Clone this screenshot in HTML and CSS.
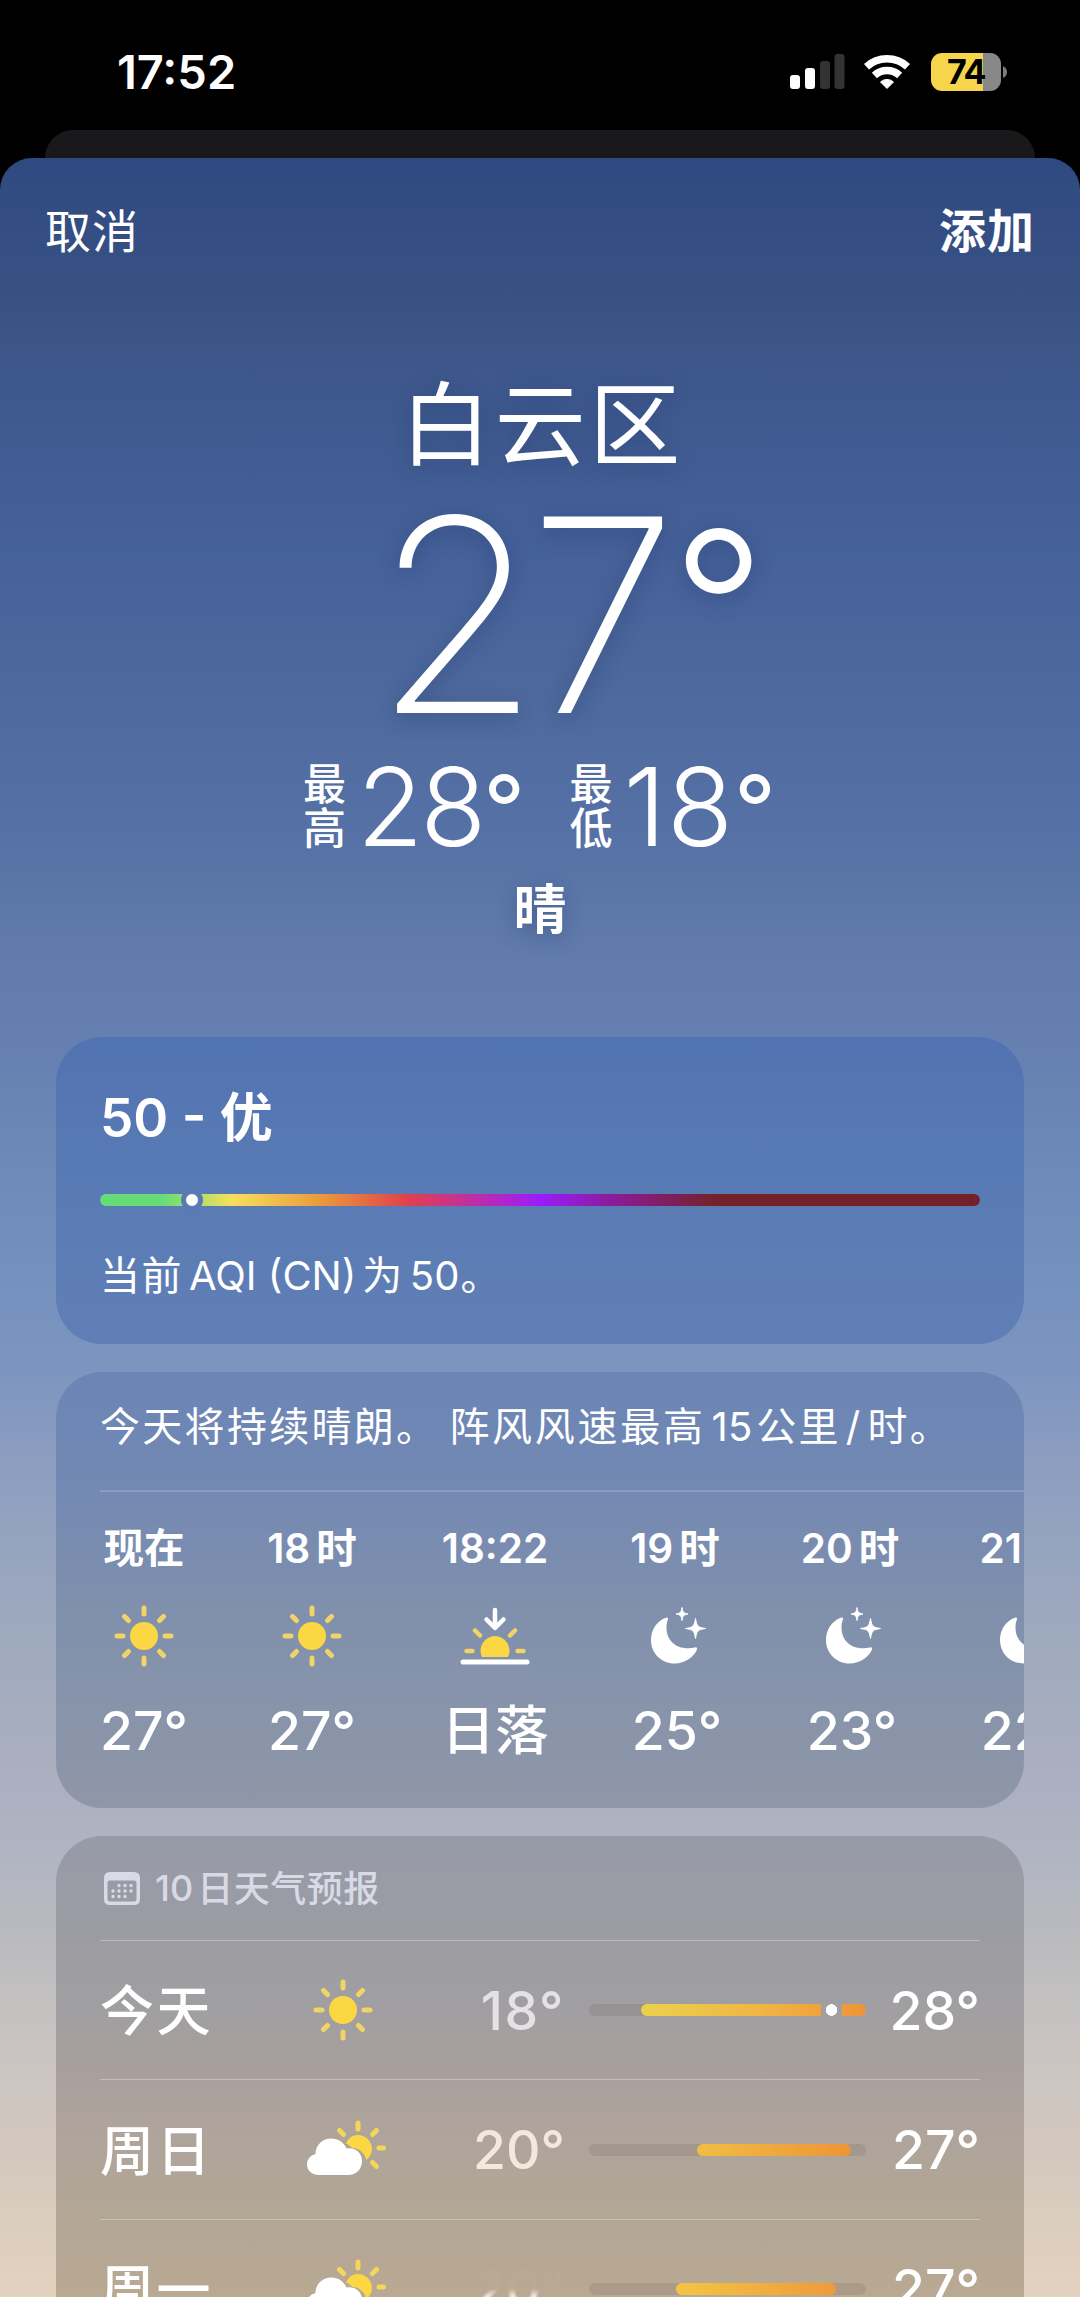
FILE: index.html
```html
<!DOCTYPE html>
<html lang="zh-CN">
<head>
<meta charset="utf-8">
<title>天气</title>
<link rel="stylesheet" href="styles.css">
</head>
<body>
<svg class="defs" width="0" height="0" aria-hidden="true">
  <symbol id="sun" viewBox="-30 -31 60 62">
    <circle r="14" fill="#fbd743"/>
    <g stroke="#f0d467" stroke-width="5" stroke-linecap="round">
      <path d="M0-28v6M0 22v6M-27 0h6M21 0h6M-19.5-19.5l4 4M15.5 15.5l4 4M19.5-19.5l-4 4M-15.5 15.5l-4 4"/>
    </g>
  </symbol>
  <symbol id="sunset" viewBox="-35 -31 70 62">
    <path d="M-13 21A14.500 14.500 0 1 1 13 21Z" fill="#fbd743"/>
    <path d="M-28.500 15h6M22.500 15h6M-20-5.500l5 5M20-5.500l-5 5" stroke="#f0d467" stroke-width="4.500" stroke-linecap="round"/>
    <path d="M0-26v17M-8.500-16.500l8.500 8.500 8.500-8.500" fill="none" stroke="#fff" stroke-width="4.500" stroke-linecap="round" stroke-linejoin="round"/>
    <path d="M-32 26h64" stroke="#fff" stroke-width="5" stroke-linecap="round"/>
  </symbol>
  <symbol id="moon" viewBox="0 -1 56 62">
    <path d="M15.500 11.500C5 15 0 24.500 0 34C0 47.500 10.500 57.500 23.500 57.500C34 57.500 43 51 46 43.500C46.500 42 45.500 41 44 41.500C27 45 15.500 36 15.500 21.500C15.500 18 16 16 16.800 14C17.300 12.500 17 11 15.500 11.500Z" fill="#fff"/>
    <path d="M31 1.500C31.800 6.500 32.500 7 37 8C32.500 9 31.800 9.500 31 14.500C30.200 9.500 29.500 9 25 8C29.500 7 30.200 6.500 31 1.500Z" fill="#fff" stroke="#fff" stroke-linejoin="round"/>
    <path d="M44.500 12.500C46 20.500 46.500 21.200 54.500 22.500C46.500 23.800 46 24.500 44.500 32.500C43 24.500 42.500 23.800 34.500 22.500C42.500 21.200 43 20.500 44.500 12.500Z" fill="#fff" stroke="#fff" stroke-linejoin="round"/>
  </symbol>
  <symbol id="cloud-sun" viewBox="0 0 80 60">
    <path d="M39 23.500C42 17 46.500 15 51 15C59 15 65 21.500 65 29C65 33.500 62.800 37 59.500 40C57 31 50 27.500 45 28C43.500 26 41.500 24.500 39 23.500Z" fill="#fbd743"/>
    <path d="M51 3v6M32.500 10.500l4 4M69.500 10.500l-4 4M72 28h4.500M65.500 42.500l4 4" stroke="#f5d658" stroke-width="5" stroke-linecap="round"/>
    <path d="M12 55C5 55 0 50.500 0 44.500C0 39.500 3 35.500 8.500 34C8.500 25 15.500 18.500 24 18.500C31.500 18.500 37 22.500 39.500 28.500C48.500 27 55 33 55 41C55 49 49.500 55 41 55Z" fill="#fff"/>
  </symbol>
</svg>

<header class="status">
  <time class="clock">17:52</time>
  <div class="indicators">
    <svg width="55" height="36" viewBox="0 0 55 36">
      <rect x="0" y="21" width="10" height="14" rx="3" fill="#fff"/>
      <rect x="15" y="14" width="10" height="21" rx="3" fill="#fff"/>
      <rect x="30" y="7" width="10" height="28" rx="3" fill="#333"/>
      <rect x="44.500" y="0" width="10" height="35" rx="3" fill="#333"/>
    </svg>
    <svg class="wifi" width="47" height="36" viewBox="0 0 47 36">
      <path d="M2.500 12.700A30.500 30.500 0 0 1 43.500 12.700M10.400 21.500A18.500 18.500 0 0 1 35.600 21.500" fill="none" stroke="#fff" stroke-width="7.500"/>
      <path d="M16.500 28A9.500 9.500 0 0 1 29.500 28L23 34.500Z" fill="#fff" stroke="#fff" stroke-linejoin="round"/>
    </svg>
    <div class="battery"><span>74</span></div>
    <svg class="battery-cap" width="4" height="12" viewBox="0 0 4 12"><path d="M0 0Q4 2 4 6T0 12Z" fill="#7c7c7e"/></svg>
  </div>
</header>

<div class="back-sheet"></div>

<main class="sheet">
  <nav class="toolbar">
    <span>取消</span>
    <span class="add">添加</span>
  </nav>

  <section class="summary">
    <h1 class="city">白云区</h1>
    <div class="now">27<i>°</i></div>
    <div class="range">
      <span class="range-label">最<br>高</span><span class="range-value high-value">28<i>°</i></span>
      <span class="range-label">最<br>低</span><span class="range-value low-value">18<i>°</i></span>
    </div>
    <div class="condition">晴</div>
  </section>

  <section class="card aqi">
    <h2 class="aqi-title">50 - 优</h2>
    <div class="aqi-bar"><span class="aqi-dot"></span></div>
    <p class="aqi-text">当前<span class="latin-a">AQI (CN)</span>为<span class="latin-b">50</span>。</p>
  </section>

  <section class="card hourly">
    <p class="hourly-text">今天将持续晴朗。<span class="sentence">阵风风速最高</span><span class="speed">15</span>公里<span class="slash">/</span>时。</p>
    <div class="hours">
      <div class="hour"><b>现在</b><svg width="60" height="62"><use href="#sun"/></svg><strong>27°</strong></div>
      <div class="hour"><b>18<i>时</i></b><svg width="60" height="62"><use href="#sun"/></svg><strong>27°</strong></div>
      <div class="hour"><b>18:22</b><svg width="70" height="62"><use href="#sunset"/></svg><strong>日落</strong></div>
      <div class="hour night"><b>19<i>时</i></b><svg width="56" height="62"><use href="#moon"/></svg><strong>25°</strong></div>
      <div class="hour night"><b>20<i>时</i></b><svg width="56" height="62"><use href="#moon"/></svg><strong>23°</strong></div>
      <div class="hour night"><b>21<i>时</i></b><svg width="56" height="62"><use href="#moon"/></svg><strong>22°</strong></div>
    </div>
  </section>

  <section class="card daily">
    <h3 class="daily-title">
      <svg width="36" height="33" viewBox="0 0 36 33">
        <path fill-rule="evenodd" d="M6 0H30Q36 0 36 6V27Q36 33 30 33H6Q0 33 0 27V6Q0 0 6 0ZM6 8.500Q3.500 8.500 3.500 11V27Q3.500 29.500 6 29.500H30Q32.500 29.500 32.500 27V11Q32.500 8.500 30 8.500Z" fill="#d8dae6"/>
        <path d="M15 13.500h.01M21 13.500h.01M27 13.500h.01M9 19h.01M15 19h.01M21 19h.01M27 19h.01M9 24.500h.01M15 24.500h.01M21 24.500h.01" stroke="#d8dae6" stroke-width="3.400" stroke-linecap="round"/>
      </svg>
      <span class="count">10</span><span class="caption">日天气预报</span>
    </h3>
    <div class="day">
      <span class="day-name">今天</span>
      <svg width="60" height="62"><use href="#sun"/></svg>
      <span class="low cool">18°</span>
      <div class="track"><span class="fill today"></span><span class="today-dot"></span></div>
      <span class="high">28°</span>
    </div>
    <div class="day">
      <span class="day-name">周日</span>
      <svg class="cloud" width="80" height="60"><use href="#cloud-sun"/></svg>
      <span class="low warm">20°</span>
      <div class="track"><span class="fill sunday"></span></div>
      <span class="high">27°</span>
    </div>
    <div class="day">
      <span class="day-name">周一</span>
      <svg class="cloud" width="80" height="60"><use href="#cloud-sun"/></svg>
      <span class="low faded">20°</span>
      <div class="track"><span class="fill monday"></span></div>
      <span class="high">27°</span>
    </div>
  </section>
</main>
</body>
</html>
```

FILE: styles.css
```css
* { box-sizing: border-box; }
html, body { height: 2297px; overflow: hidden; }
body {
  margin: 0;
  display: flex;
  flex-direction: column;
  background: #000;
  color: #fff;
  font-family: Inter, "Noto Sans CJK SC", sans-serif;
}
h1, h2, h3, p { margin: 0; font-weight: inherit; font-size: inherit; }
i { font-style: normal; }
svg { display: block; flex: none; }
.defs { position: absolute; }

.status {
  height: 130px;
  flex: none;
  display: flex;
  justify-content: space-between;
  align-items: flex-start;
  padding: 52px 73px 0 117px;
}
.clock { font-size: 47px; line-height: 40px; font-weight: 600; }
.indicators { display: flex; align-items: center; height: 40px; }
.wifi { margin-left: 19px; }
.battery {
  width: 70px;
  height: 38px;
  margin-left: 20px;
  border-radius: 11px;
  background: linear-gradient(90deg, #f6d54c 52px, #88888a 52px);
  color: #000;
  font-size: 34px;
  line-height: 38px;
  font-weight: 700;
  text-align: center;
  letter-spacing: -1.500px;
}
.battery-cap { margin-left: 2px; }

.back-sheet {
  flex: none;
  height: 60px;
  margin: 0 45px -32px;
  border-radius: 28px 28px 0 0;
  background: #19191b;
}

.sheet {
  position: relative;
  flex: none;
  height: 2139px;
  overflow: hidden;
  border-radius: 32px 32px 0 0;
  background: linear-gradient(180deg, #2f4a80 0, #385185 132px, #3c568a 192px, #46629a 400px, #4d689c 520px, #5671a5 680px, #617cac 800px, #6580b0 880px, #7390bd 1100px, #7c95c0 1210px, #8a9cc0 1290px, #95a3bf 1380px, #a0abbd 1500px, #adb0c0 1640px, #b1b4c2 1700px, #babbbe 1780px, #c9c4c2 1890px, #d4c8be 2000px, #e3d2be 2139px);
}
.toolbar {
  display: flex;
  justify-content: space-between;
  padding: 45px 45px 0;
  height: 162px;
  font-size: 46px;
  line-height: 56px;
  letter-spacing: 1px;
}
.toolbar .add { font-weight: 700; font-size: 47px; }

.summary {
  height: 717px;
  display: flex;
  flex-direction: column;
  align-items: center;
  text-shadow: 0 5px 22px rgba(20, 40, 90, .32);
}
.city { margin-top: 40px; height: 126px; font-size: 91px; line-height: 130px; letter-spacing: 3.500px; padding-left: 4px; }
.now {
  height: 240px;
  margin-top: 9px;
  padding-left: 47px;
  font-size: 270px;
  line-height: 240px;
  font-weight: 200;
  letter-spacing: -12px;
}
.now i { margin-left: 6px; font-size: 206px; font-weight: 270; line-height: 0; vertical-align: 34px; }
.range { display: flex; margin-top: 26px; height: 90px; width: 474px; align-items: center; text-shadow: none; }
.range-label { width: 42px; font-size: 43px; line-height: 44px; font-weight: 500; }
.range-value { font-size: 108px; line-height: 90px; font-weight: 300; letter-spacing: -3px; }
.range-value i { font-size: 92px; font-weight: 370; line-height: 0; vertical-align: 5px; }
.high-value { width: 216px; margin: 2px 0 0 12px; }
.low-value { margin: 2px 0 0 12px; letter-spacing: 1px; }
.condition { margin-top: 24px; font-size: 53px; line-height: 70px; font-weight: 700; }

.card { width: 968px; margin: 0 auto 28px; border-radius: 46px; overflow: hidden; padding-left: 44px; }
.aqi { height: 307px; padding-top: 45px; background: linear-gradient(#5273b1, #587ab4 45%, #617fb6); }
.aqi-title { font-size: 53px; line-height: 72px; font-weight: 600; }
.aqi-bar {
  position: relative;
  width: 880px;
  height: 12px;
  margin-top: 40px;
  border-radius: 6px;
  background: linear-gradient(90deg, #66dc79 0, #66dc79 7%, #f6e05c 15%, #ea9a3c 25%, #e0404e 35%, #9c1cfa 50%, #8a1c9c 58%, #74222a 70%, #74222a 100%);
}
.aqi-dot {
  position: absolute;
  left: 81px;
  top: -5px;
  width: 22px;
  height: 22px;
  border: 5px solid #587ab5;
  border-radius: 50%;
  background: #fff;
}
.aqi-text { margin-top: 40px; font-size: 40px; line-height: 60px; letter-spacing: 1.500px; }
.latin-a { letter-spacing: 0; margin: 0 6px; }
.latin-b { letter-spacing: 0; margin: 0 1px 0 6px; }

.hourly { height: 436px; background: linear-gradient(#6a85b5, #7489b3 28%, #7e8fad 50%, #8894aa 78%, #8f96a7); }
.hourly-text { height: 120px; padding-top: 25px; font-size: 40px; line-height: 60px; letter-spacing: 2.300px; white-space: nowrap; border-bottom: 2px solid rgba(255,255,255,.17); }
.sentence { margin-left: 11px; letter-spacing: 2.700px; }
.speed { margin: 0 4px 0 6px; letter-spacing: 0; }
.slash { margin: 0 5px; }
.hours { display: grid; grid-template-columns: 168px 168px 198px 166px 184px 164px; margin-left: -40px; width: 1048px; }
.hour { display: flex; flex-direction: column; align-items: center; }
.hour b { margin-top: 27px; font-size: 40.500px; line-height: 60px; font-weight: 600; white-space: nowrap; }
.hour b i { margin-left: 6px; }
.hour svg { margin-top: 26px; }
.hour strong { margin-top: 29px; font-size: 53.500px; line-height: 70px; font-weight: 500; }
.night b { margin-left: -4px; }
.night svg { margin-left: 4px; }

.daily { height: 600px; padding-right: 44px; margin-bottom: 0; background: linear-gradient(#979aa8, #9b9ca3 90px, #a19fa1 180px, #a89f9d 230px, #aea49c 290px, #b2a695 370px, #b9a993 461px); }
.daily-title {
  display: flex;
  align-items: center;
  height: 104px;
  padding: 0 0 0 4px;
  color: #d8dae6;
  font-size: 36px;
  font-weight: 500;
}
.count { margin: 0 4px 0 15px; }
.caption { margin-top: -5px; letter-spacing: .5px; }
.day {
  display: flex;
  align-items: center;
  height: 139.400px;
  border-top: 1px solid rgba(255,255,255,.3);
  font-size: 53.500px;
  font-weight: 500;
}
.day-name { width: 213px; margin-top: -5px; font-size: 54px; letter-spacing: 2.500px; }
.cloud { margin: 0 -14px 0 -6px; }
.low { width: 192px; text-align: right; }
.cool { color: #e4e2e6; letter-spacing: 1.500px; }
.warm { color: #f4e8de; }
.faded {
  color: #f4e8de;
  filter: blur(1px);
  -webkit-mask-image: linear-gradient(rgba(0,0,0,.03) 50%, #000 62%);
  mask-image: linear-gradient(rgba(0,0,0,.03) 50%, #000 62%);
}
.track { position: relative; width: 277px; height: 12px; margin-left: 24px; border-radius: 6px; background: rgba(70, 60, 50, .12); }
.fill { display: block; height: 12px; border-radius: 6px; }
.today { margin-left: 52px; background: linear-gradient(90deg, #ecd14c, #f0b443 55%, #ee9438); }
.sunday { width: 154px; margin-left: 108px; background: linear-gradient(90deg, #f2bd43, #ed9437); }
.monday { width: 160px; margin-left: 87px; background: linear-gradient(90deg, #f3c545, #ef9a3a); }
.today-dot {
  position: absolute;
  left: 232px;
  top: 0;
  width: 21px;
  height: 12px;
  background: radial-gradient(circle at center, #fff 5.500px, #a19fa1 6px);
}
.high { margin-left: auto; }
```
